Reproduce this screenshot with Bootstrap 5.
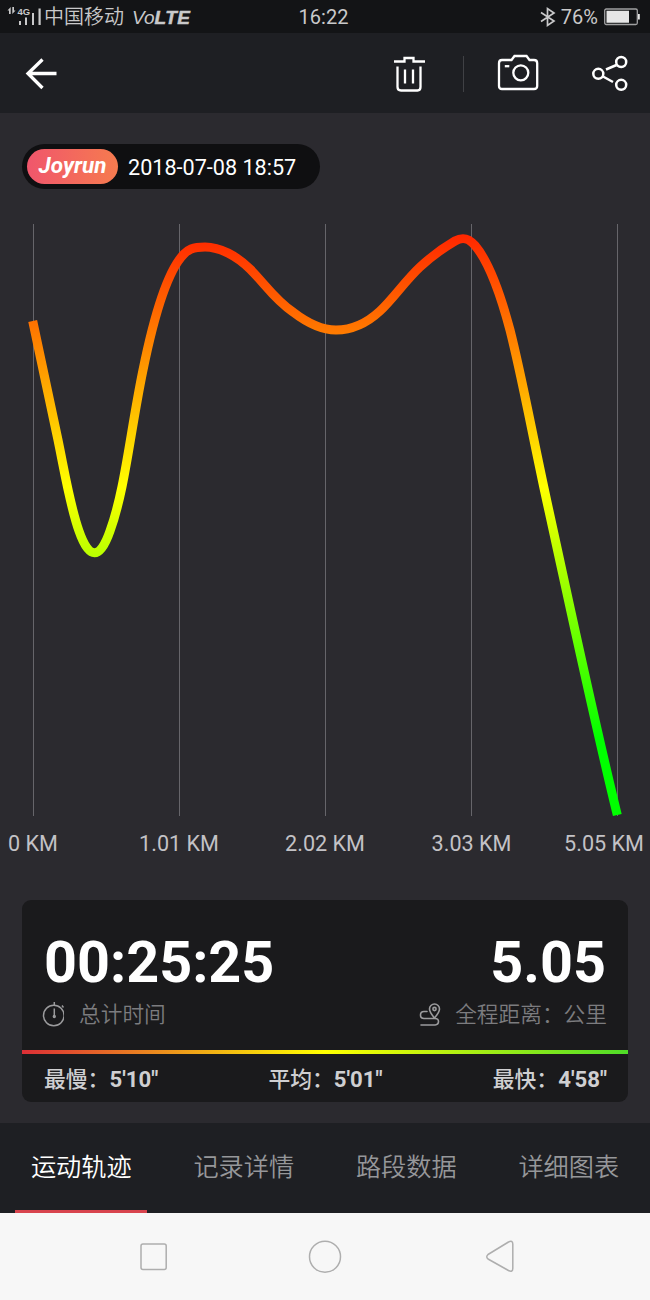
<!DOCTYPE html>
<html lang="zh-CN">
<head>
<meta charset="utf-8">
<meta name="viewport" content="width=device-width, initial-scale=1">
<title>Joyrun</title>
<link href="https://cdn.jsdelivr.net/npm/bootstrap@5.3.0/dist/css/bootstrap.min.css" rel="stylesheet">
<style>
body{background:#2b2a2f;font-family:Roboto,"Noto Sans CJK SC",sans-serif;width:650px;height:1300px;overflow:hidden}
svg{display:block;flex:none}
.status{height:33px;background:#131416;color:#c9c9ca;font-size:20px;line-height:33px;padding:1px 10px 0 7px}
.status-side{width:292px}
.carrier{font-weight:350;margin:0 8px 0 1px}
.volte{font-family:"Liberation Sans",sans-serif;font-style:italic;font-size:19px}
.volte b{-webkit-text-stroke:.5px #c9c9ca;letter-spacing:.4px}
.appbar{height:80px;background:#1e1f23;padding:2px 20px 0 22px}
.rule{width:1px;height:36px;background:#404145;margin:0 33px 0 37px}
.stamp{width:298px;height:45px;margin:31px 0 0 22px;background:#0f0f11;border-radius:23px;color:#fff;font-size:21.6px;padding-left:5px}
.stamp-time{margin:3px 0 0 10px}
.brand{width:91px;height:35px;border-radius:18px;background:linear-gradient(90deg,#f0566c,#f67b4f);font-weight:700;font-style:italic;font-size:22.500px;line-height:32px;text-align:center}
.plot text{font-size:21.600px;fill:#c3c2c6}
.summary{height:202px;margin:0 22px;background:#1a1a1c;border-radius:9px}
.totals{height:150px;padding:28px 22px 0}
.figure-num{font-size:57.5px;line-height:70px;font-weight:700;color:#fff}
.caption-row{height:33px;font-size:21.7px;line-height:33px;color:#7c7c7f;font-weight:350}
.pace-line{height:4px;background:linear-gradient(90deg,#dc2f36,#ff0 50%,#4fdc28)}
.paces{height:48px;padding:1px 21px 0 22px;font-size:21.800px;line-height:48px;font-weight:500;color:#cfcfd1}
.paces b{font-size:22.200px}
.tabs{height:91px;margin-top:21px;background:#1e1f23;font-size:25.2px;color:#96979a}
.tabs .tab-item{width:25%;height:91px;line-height:89px;text-align:center;position:relative;font-weight:350}
.tabs .active{color:#fff}
.tabs .active::after{content:"";position:absolute;left:15px;width:132px;bottom:1px;height:3px;background:#d8444e}
.keys{height:87px;margin-top:-1px;background:#f7f7f7;position:relative}
</style>
</head>
<body class="d-flex flex-column m-0">
<div class="status d-flex justify-content-between">
  <div class="status-side d-flex align-items-center">
    <svg width="36" height="22" viewBox="7 6 36 22" fill="#c9c9ca">
      <path d="M7.500 10.500 10.700 7v7H9V10.500zM15.500 10.500 12.300 14V7H14v3.500z"/>
      <text x="17.500" y="15" font-size="9.500" font-family="Liberation Sans" font-weight="700">4G</text>
      <path d="M19 21h2v4h-2zM25 17.500h2v7.500h-2zM32 13h2v12h-2zM38.500 8.500h2.200V25h-2.200z"/>
    </svg>
    <span class="carrier">中国移动</span><span class="volte">Vo<b>LTE</b></span>
  </div>
  <div>16:22</div>
  <div class="status-side d-flex align-items-center justify-content-end">
    <svg width="18" height="22" viewBox="0 0 18 22" fill="none" stroke="#c9c9ca" stroke-width="1.700"><path d="M2 6.500l13 8.500-6.500 4.500V2.500L15 7 2 15.500"/></svg>
    <span class="ms-1">76%</span>
    <svg style="margin-left:6px" width="36" height="18" viewBox="0 0 36 18"><rect x=".7" y="1" width="32.600" height="15.500" rx="1.500" fill="none" stroke="#a0a0a1" stroke-width="1.300"/><path fill="#e6e6e6" d="M2.500 2.800h22.500v11.900h-22.500zM34 6h1.800v5.500H34z"/></svg>
  </div>
</div>

<div class="appbar d-flex align-items-center">
  <svg class="me-auto" width="36" height="36" viewBox="22 56 36 36" fill="none" stroke="#fff" stroke-width="3.300"><path d="M42.500 59.500 28 73.500l14.500 14.500M28 73.500h28.500"/></svg>
  <svg width="34" height="40" viewBox="393 53.500 34 40" fill="none" stroke="#fff" stroke-width="2.300"><path d="M395 61h10.500v-3.500h9V61H426M398.500 66V86.500q0 3.500 3.500 3.500h16.500q3 0 3-3.500V66M406 69v14M414 69v14"/></svg>
  <div class="rule"></div>
  <svg width="42" height="40" viewBox="497 54 42 40" fill="none" stroke="#fff" stroke-width="2.300"><path d="M502 60h9.500l3-4h12l3 4H534q3.200 0 3.200 3.200V86q0 3-3.200 3H502q-3 0-3-3V63.200q0-3.200 3-3.200z"/><circle cx="520.800" cy="72.800" r="7.500"/><path d="M504.800 66.200h4.500"/></svg>
  <svg style="margin-left:52px" width="39" height="40" viewBox="591 54 39 40" fill="none" stroke="#fff" stroke-width="2.500"><circle cx="598.300" cy="73.800" r="5"/><circle cx="621.200" cy="62" r="5"/><circle cx="621.200" cy="84.800" r="5"/><path d="m606 69.500 10.500-4.500M603 76.500l10 5.500"/></svg>
</div>

<div class="stamp d-flex align-items-center flex-shrink-0">
  <div class="brand">Joyrun</div><span class="stamp-time">2018-07-08 18:57</span>
</div>

<svg class="plot" width="650" height="711" viewBox="0 189 650 711">
  <defs><linearGradient id="pace" gradientUnits="userSpaceOnUse" x1="0" y1="190" x2="0" y2="740"><stop offset="0" stop-color="#f00"/><stop offset=".54" stop-color="#ff0"/><stop offset="1" stop-color="#0f0"/></linearGradient></defs>
  <path d="M33.500 224V816M179.500 224V816M325.500 224V816M471.500 224V816M617.500 224V816" stroke="#66656a" fill="none"/>
  <path fill="none" stroke="url(#pace)" stroke-width="9" d="M32.700 321 58 440C65 474 70 506 79 531C89 560 100 560 110 531C125 490 130 433 143 370C154 316 168 270 184 254C188 250 192 247 205 247C220 247 237 256 250 269C265 284 275 300 293 312C306 322 320 330 336 330C352 330 367 323 380 311C393 299 405 281 420 267C432 256 443 248 455 241C463 236.500 469 238.500 475 245.500C490 263 502 300 510 330C522 377 532 433 547 502C566 588 592 712 617.300 815"/>
  <g text-anchor="middle"><text x="33" y="850.500">0 KM</text><text x="179" y="850.500">1.01 KM</text><text x="325" y="850.500">2.02 KM</text><text x="471.500" y="850.500">3.03 KM</text><text x="604" y="850.500">5.05 KM</text></g>
</svg>

<div class="summary flex-shrink-0">
  <div class="totals d-flex justify-content-between">
    <div>
      <div class="figure-num">00:25:25</div>
      <div class="caption-row d-flex align-items-center"><svg style="margin:0 15px 0 -2px" width="22" height="28" viewBox="42 1000 22 28" fill="none" stroke="#9b9b9d" stroke-width="1.500"><circle cx="53.800" cy="1014.500" r="10.300"/><path d="M54.300 1001v3M62 1004.500l1.500 2M54.300 1007.500v8"/><circle cx="54.300" cy="1015.500" r=".9"/></svg>总计时间</div>
    </div>
    <div class="text-end">
      <div class="figure-num">5.05</div>
      <div class="caption-row d-flex align-items-center"><svg style="margin-right:13px" width="23" height="28" viewBox="419 1000 23 28" fill="none" stroke="#9b9b9d" stroke-width="1.600" stroke-linecap="round" stroke-linejoin="round"><path d="M427 1010.500h-3q-3.500 0-3.500 3.500t3.500 3.500h11q3.500 0 3.500 3t-3.500 3.500h-14M434.500 1017c-3-3.500-5-6-5-9a5 5 0 0 1 10 0c0 3-2 5.500-5 9z"/><circle cx="434.500" cy="1008" r="1.600"/></svg><span style="margin-right:-1px">全程距离：公里</span></div>
    </div>
  </div>
  <div class="pace-line"></div>
  <div class="paces d-flex justify-content-between"><span>最慢：<b>5'10″</b></span><span>平均：<b>5'01″</b></span><span>最快：<b>4'58″</b></span></div>
</div>

<div class="tabs d-flex flex-shrink-0">
  <div class="tab-item active">运动轨迹</div><div class="tab-item">记录详情</div><div class="tab-item">路段数据</div><div class="tab-item">详细图表</div>
</div>
<div class="keys flex-shrink-0">
  <svg width="650" height="87" viewBox="0 1213 650 87" fill="none" stroke="#aeaeae" stroke-width="1.500"><rect x="141" y="1244" width="25.200" height="25.500" rx="2"/><circle cx="325" cy="1256.700" r="15.500"/><path stroke-linejoin="round" d="M488 1254.500 508.500 1242q4.300-2 4.300 2v24.500q0 4-4.300 2L488 1259q-2.500-2.200 0-4.500z"/></svg>
</div>
<script src="https://cdn.jsdelivr.net/npm/bootstrap@5.3.0/dist/js/bootstrap.bundle.min.js"></script>
</body>
</html>
